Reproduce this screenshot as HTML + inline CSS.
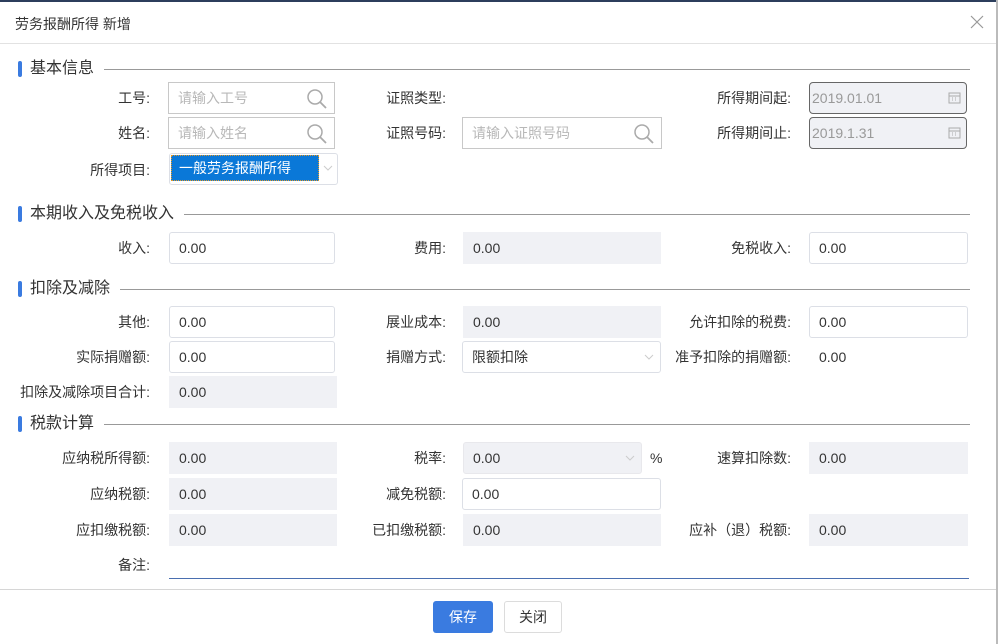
<!DOCTYPE html>
<html><head><meta charset="utf-8"><style>
*{box-sizing:border-box;margin:0;padding:0}
body{width:998px;height:644px;background:#fff;position:relative;overflow:hidden;font-family:"Liberation Sans","Noto Sans CJK SC",sans-serif;font-size:14px;color:#333}
.a{position:absolute}
.lb{position:absolute;text-align:right;white-space:nowrap;line-height:32px;height:32px}
.in{position:absolute;height:32px;border:1px solid #dcdfe6;border-radius:3px;line-height:30px;padding-left:9px;background:#fff;white-space:nowrap}
.ro{position:absolute;height:32px;background:#f0f1f5;line-height:32px;padding-left:10px}
.ph{color:#b8b8b8;border-color:#c8c8c8;border-radius:0}
.sec{position:absolute;left:18px;height:20px;width:952px}
.sec .bar{position:absolute;left:0;top:2px;width:4px;height:16px;background:#3a7be0;border-radius:2px}
.sec .t{position:absolute;left:12px;top:0;font-size:16px;line-height:20px;color:#333}
.sec .ln{position:absolute;right:0;top:10px;height:1px;background:#999}
.mag{position:absolute;right:6px;top:5px}
</style></head><body>
<div class="a" style="left:0;top:0;width:998px;height:2px;background:#2c3e5c"></div>
<div class="a" style="right:0;top:0;width:2px;height:644px;background:#bbb"></div>
<div class="a" style="left:15px;top:14px;font-size:14px;line-height:20px">劳务报酬所得 新增</div>
<svg class="a" style="left:970px;top:15px" width="14" height="14" viewBox="0 0 14 14"><path d="M1 1L13 13M13 1L1 13" stroke="#999" stroke-width="1.2"/></svg>
<div class="a" style="left:0;top:43px;width:996px;height:1px;background:#e2e2e2"></div>

<div class="sec" style="top:59px"><div class="bar"></div><div class="t">基本信息</div><div class="ln" style="left:86px"></div></div>
<div class="lb" style="right:848px;top:82px">工号:</div>
<div class="in ph" style="left:168px;top:82px;width:167px">请输入工号<svg class="mag" width="22" height="22" viewBox="0 0 22 22"><circle cx="9" cy="9" r="7" fill="none" stroke="#aaa" stroke-width="1.5"/><path d="M14 14L20 20" stroke="#aaa" stroke-width="1.8"/></svg></div>
<div class="lb" style="right:552px;top:82px">证照类型:</div>
<div class="lb" style="right:207px;top:82px">所得期间起:</div>
<div class="in" style="left:809px;top:82px;width:158px;background:#f0f1f5;border-color:#666;border-radius:4px;color:#999;padding-left:2px">2019.01.01<svg class="a" style="right:5px;top:8px" width="13" height="13" viewBox="0 0 13 13"><rect x="1" y="2" width="11" height="10" fill="none" stroke="#aaa"/><path d="M1 5H12M4 7h1M7 7h1M4 9h1M7 9h1" stroke="#aaa"/></svg></div>

<div class="lb" style="right:848px;top:117px">姓名:</div>
<div class="in ph" style="left:168px;top:117px;width:167px">请输入姓名<svg class="mag" width="22" height="22" viewBox="0 0 22 22"><circle cx="9" cy="9" r="7" fill="none" stroke="#aaa" stroke-width="1.5"/><path d="M14 14L20 20" stroke="#aaa" stroke-width="1.8"/></svg></div>
<div class="lb" style="right:552px;top:117px">证照号码:</div>
<div class="in ph" style="left:462px;top:117px;width:200px">请输入证照号码<svg class="mag" width="22" height="22" viewBox="0 0 22 22"><circle cx="9" cy="9" r="7" fill="none" stroke="#aaa" stroke-width="1.5"/><path d="M14 14L20 20" stroke="#aaa" stroke-width="1.8"/></svg></div>
<div class="lb" style="right:207px;top:117px">所得期间止:</div>
<div class="in" style="left:809px;top:117px;width:158px;background:#f0f1f5;border-color:#666;border-radius:4px;color:#999;padding-left:2px">2019.1.31<svg class="a" style="right:5px;top:8px" width="13" height="13" viewBox="0 0 13 13"><rect x="1" y="2" width="11" height="10" fill="none" stroke="#aaa"/><path d="M1 5H12M4 7h1M7 7h1M4 9h1M7 9h1" stroke="#aaa"/></svg></div>

<div class="lb" style="right:848px;top:154px">所得项目:</div>
<div class="in" style="left:169px;top:153px;width:169px;border-radius:3px"></div>
<div class="a" style="left:171px;top:155px;width:148px;height:26px;background:#0a78d8;border:1px dotted #e39a2a;color:#fff;line-height:24px;padding-left:7px">一般劳务报酬所得</div>
<svg class="a" style="left:323px;top:165px" width="10" height="6" viewBox="0 0 10 6"><path d="M1 1L5 5L9 1" fill="none" stroke="#ccc"/></svg>

<div class="sec" style="top:204px"><div class="bar"></div><div class="t">本期收入及免税收入</div><div class="ln" style="left:166px"></div></div>
<div class="lb" style="right:848px;top:232px">收入:</div>
<div class="in" style="left:169px;top:232px;width:166px">0.00</div>
<div class="lb" style="right:552px;top:232px">费用:</div>
<div class="ro" style="left:463px;top:232px;width:198px">0.00</div>
<div class="lb" style="right:207px;top:232px">免税收入:</div>
<div class="in" style="left:809px;top:232px;width:159px">0.00</div>

<div class="sec" style="top:279px"><div class="bar"></div><div class="t">扣除及减除</div><div class="ln" style="left:102px"></div></div>
<div class="lb" style="right:848px;top:306px">其他:</div>
<div class="in" style="left:169px;top:306px;width:166px">0.00</div>
<div class="lb" style="right:552px;top:306px">展业成本:</div>
<div class="ro" style="left:463px;top:306px;width:198px">0.00</div>
<div class="lb" style="right:207px;top:306px">允许扣除的税费:</div>
<div class="in" style="left:809px;top:306px;width:159px">0.00</div>

<div class="lb" style="right:848px;top:341px">实际捐赠额:</div>
<div class="in" style="left:169px;top:341px;width:166px">0.00</div>
<div class="lb" style="right:552px;top:341px">捐赠方式:</div>
<div class="in" style="left:462px;top:341px;width:199px">限额扣除<svg class="a" style="right:6px;top:12px" width="10" height="6" viewBox="0 0 10 6"><path d="M1 1L5 5L9 1" fill="none" stroke="#ccc"/></svg></div>
<div class="lb" style="right:207px;top:341px">准予扣除的捐赠额:</div>
<div class="lb" style="left:819px;top:341px;text-align:left">0.00</div>

<div class="lb" style="right:848px;top:376px">扣除及减除项目合计:</div>
<div class="ro" style="left:169px;top:376px;width:168px">0.00</div>

<div class="sec" style="top:414px"><div class="bar"></div><div class="t">税款计算</div><div class="ln" style="left:86px"></div></div>
<div class="lb" style="right:848px;top:442px">应纳税所得额:</div>
<div class="ro" style="left:169px;top:442px;width:168px">0.00</div>
<div class="lb" style="right:552px;top:442px">税率:</div>
<div class="in" style="left:463px;top:442px;width:179px;background:#f0f1f5;border-color:#e8e8ec">0.00<svg class="a" style="right:6px;top:12px" width="10" height="6" viewBox="0 0 10 6"><path d="M1 1L5 5L9 1" fill="none" stroke="#ccc"/></svg></div>
<div class="lb" style="left:650px;top:442px">%</div>
<div class="lb" style="right:207px;top:442px">速算扣除数:</div>
<div class="ro" style="left:809px;top:442px;width:159px">0.00</div>

<div class="lb" style="right:848px;top:478px">应纳税额:</div>
<div class="ro" style="left:169px;top:478px;width:168px">0.00</div>
<div class="lb" style="right:552px;top:478px">减免税额:</div>
<div class="in" style="left:462px;top:478px;width:199px">0.00</div>

<div class="lb" style="right:848px;top:514px">应扣缴税额:</div>
<div class="ro" style="left:169px;top:514px;width:168px">0.00</div>
<div class="lb" style="right:552px;top:514px">已扣缴税额:</div>
<div class="ro" style="left:463px;top:514px;width:198px">0.00</div>
<div class="lb" style="right:207px;top:514px">应补（退）税额:</div>
<div class="ro" style="left:809px;top:514px;width:159px">0.00</div>

<div class="lb" style="right:848px;top:549px">备注:</div>
<div class="a" style="left:169px;top:578px;width:800px;height:1px;background:#4a6fb0"></div>

<div class="a" style="left:0;top:589px;width:996px;height:1px;background:#d6d6d6"></div>
<div class="a" style="left:433px;top:601px;width:60px;height:32px;background:#3a7be0;border-radius:3px;color:#fff;text-align:center;line-height:32px">保存</div>
<div class="a" style="left:504px;top:601px;width:58px;height:32px;border:1px solid #dcdcdc;border-radius:3px;text-align:center;line-height:30px">关闭</div>
</body></html>
